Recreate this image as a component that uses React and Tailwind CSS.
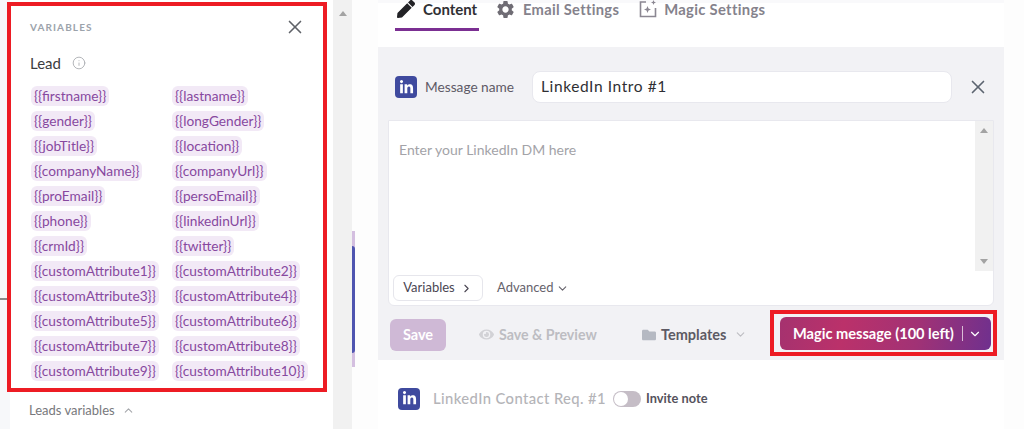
import React from 'react';
import { ChevronDown, ChevronRight, ChevronUp, Info, X } from 'lucide-react';
import { FaEye, FaFolder, FaLinkedinIn, FaPen } from 'react-icons/fa';
import { MdSettings } from 'react-icons/md';

const variables = [
  ['{{firstname}}', '{{lastname}}'],
  ['{{gender}}', '{{longGender}}'],
  ['{{jobTitle}}', '{{location}}'],
  ['{{companyName}}', '{{companyUrl}}'],
  ['{{proEmail}}', '{{persoEmail}}'],
  ['{{phone}}', '{{linkedinUrl}}'],
  ['{{crmId}}', '{{twitter}}'],
  ['{{customAttribute1}}', '{{customAttribute2}}'],
  ['{{customAttribute3}}', '{{customAttribute4}}'],
  ['{{customAttribute5}}', '{{customAttribute6}}'],
  ['{{customAttribute7}}', '{{customAttribute8}}'],
  ['{{customAttribute9}}', '{{customAttribute10}}'],
];

const LinkedinBadge = () => (
  <span className="flex h-[22px] w-[22px] shrink-0 items-center justify-center rounded-[4px] bg-[#3f4a9e] text-white">
    <FaLinkedinIn size={15} />
  </span>
);

const MagicIcon = () => (
  <svg width="20" height="20" viewBox="0 0 20 20" fill="none" className="shrink-0 text-[#8b8792]">
    <path d="M8 3H2.5v14.500h15V9" stroke="currentColor" strokeWidth="1.600" />
    <path d="M9.500 7l1 2.500 2.500 1-2.500 1-1 2.500-1-2.500-2.500-1 2.500-1z" fill="currentColor" />
    <path d="M15.500 1l.7 1.800 1.800.7-1.800.7-.7 1.800-.7-1.800-1.800-.7 1.800-.7z" fill="currentColor" />
  </svg>
);

const VariablesPanel = () => (
  <div className="flex h-full w-[323px] flex-col bg-white">
    <div className="-ml-[3px] mt-[2px] h-[390px] w-[320px] border-4 border-[#ed1c24] pl-5 pr-[20px]">
      <div className="flex h-[42px] items-center justify-between">
        <span className="-ml-px text-[10px] font-bold tracking-[1.100px] text-[#9ca3ab]">VARIABLES</span>
        <X size={22} strokeWidth={1.800} className="-mr-[3px] text-[#5f6268]" />
      </div>
      <div className="-ml-px flex h-[30px] items-center gap-[11px] text-[15px] text-[#3c3c40]">
        Lead
        <Info size={14} strokeWidth={1.500} className="text-[#a9abb0]" />
      </div>
      <div className="mt-[8px] grid grid-cols-[141px_1fr] gap-y-[5px]">
        {variables.flat().map((name) => (
          <span
            key={name}
            className="h-5 justify-self-start rounded-[6px] bg-[#f2e9f6] px-[3px] text-[13.700px] leading-5 text-[#87489f]"
          >
            {name}
          </span>
        ))}
      </div>
    </div>
    <div className="ml-[19px] mt-[9px] flex items-center gap-[7px] text-[13px] text-[#77787c]">
      Leads variables
      <ChevronUp size={13} className="text-[#a6a8ac]" />
    </div>
  </div>
);

const Tabs = () => (
  <div className="h-[44px] bg-white pl-[17px]">
    <div className="flex h-[28px] items-start">
      <div className="h-[28px] w-[84px] border-b-[3px] border-[#7b2f92]">
        <div className="flex h-[12px] items-center gap-2 pl-[2px] text-[15px] font-bold text-[#303034]">
          <FaPen size={18} className="text-[#222226]" />
          Content
        </div>
      </div>
      <div className="ml-[16px] flex h-[12px] items-center gap-[7px] text-[14.700px] font-bold tracking-[.3px] text-[#85828c]">
        <MdSettings size={21} className="text-[#6f6c74]" />
        Email Settings
      </div>
      <div className="ml-[19px] flex h-[12px] items-center gap-[6px] text-[14.800px] font-bold tracking-[.3px] text-[#85828c]">
        <MagicIcon />
        Magic Settings
      </div>
    </div>
  </div>
);

const Editor = () => (
  <div className="ml-[10px] mt-[17px] flex h-[186px] w-[606px] flex-col rounded-b-[6px] border border-[#e8e8ee] bg-white">
    <div className="flex h-[150px] justify-between">
      <p className="pl-[10px] pt-[18px] text-[14px] text-[#a3a3a8]">Enter your LinkedIn DM here</p>
      <div className="flex w-[18px] flex-col items-center justify-between bg-[#f1f1f1] py-[7px]">
        <span className="h-0 w-0 border-x-4 border-b-[5px] border-x-transparent border-b-[#a3a3a3]" />
        <span className="h-0 w-0 border-x-4 border-t-[5px] border-x-transparent border-t-[#a3a3a3]" />
      </div>
    </div>
    <div className="mt-[4px] flex items-center pl-[4px]">
      <div className="flex h-[26px] w-[90px] items-center justify-center gap-[5px] rounded-[6px] border border-[#e6e6ec] text-[13px] text-[#4a4652]">
        Variables
        <ChevronRight size={13} />
      </div>
      <div className="ml-[14px] flex items-center gap-[3px] text-[13px] text-[#66636c]">
        Advanced
        <ChevronDown size={13} />
      </div>
    </div>
  </div>
);

const ActionBar = () => (
  <div className="ml-[12px] flex h-[54px] items-center">
    <div className="mt-[3px] flex h-8 w-[56px] shrink-0 items-center justify-center rounded-[6px] bg-[#cfb9d6] text-[14.500px] font-bold text-white">
      Save
    </div>
    <div className="ml-[33px] mt-[3px] flex w-[118px] shrink-0 items-center gap-[5px] whitespace-nowrap text-[14.200px] font-bold text-[#bdbdc2]">
      <FaEye size={15} className="shrink-0 text-[#d2d2d6]" />
      Save &amp; Preview
    </div>
    <div className="ml-[45px] mt-[3px] flex w-[103px] shrink-0 items-center gap-[5px] text-[14.500px] font-bold text-[#5d5a64]">
      <FaFolder size={14} className="shrink-0 text-[#b5b9c2]" />
      Templates
      <ChevronDown size={13} className="ml-[3px] shrink-0 text-[#bdbdc2]" />
    </div>
    <div className="ml-[25px] h-[46px] w-[227px] shrink-0 border-4 border-[#ed1c24] pl-[6px] pt-[3px]">
      <div className="flex h-[33px] w-[211px] items-center whitespace-nowrap rounded-[6px] bg-[linear-gradient(100deg,#a5326f_0%,#bb316a_30%,#a13275_65%,#6f308e_100%)] pl-[13px] text-[14.600px] font-bold text-white">
        Magic message (100 left)
        <span className="ml-2 h-[15px] w-px shrink-0 bg-[#d9bcd6]" />
        <ChevronDown size={14} className="ml-[5px] shrink-0" />
      </div>
    </div>
  </div>
);

const ContactRow = () => (
  <div className="flex h-[69px] items-center bg-white pl-5 pt-[8px]">
    <LinkedinBadge />
    <span className="ml-[13px] whitespace-nowrap text-[14.800px] font-medium tracking-[.4px] text-[#b4b4b8]">LinkedIn Contact Req. #1</span>
    <span className="ml-[7px] flex h-4 w-[28px] shrink-0 items-center rounded-full bg-[#c5bdc6] pl-px">
      <span className="h-[14px] w-[14px] rounded-full bg-white" />
    </span>
    <span className="ml-[5px] whitespace-nowrap text-[12.800px] font-bold text-[#55525c]">Invite note</span>
  </div>
);

const App = () => (
  <div className="relative flex h-[429px] w-[1024px] overflow-hidden bg-[#fdfdfd] font-['Lato',sans-serif]">
    {/* cut-off divider behind the panel */}
    <span className="absolute left-0 top-[298px] h-[2px] w-[7px] bg-[#8a8a8a]" />
    <div className="h-full w-[333px] bg-[#f7f8fa] pl-[10px]">
      <VariablesPanel />
    </div>
    <div className="flex h-full w-[19px] flex-col items-center bg-[#f1f1f1] pt-[11px]">
      <span className="h-0 w-0 border-x-4 border-b-[5px] border-x-transparent border-b-[#a3a3a3]" />
    </div>
    <div className="h-full w-[26px]">
      <div className="mt-[231px] h-[136px] w-[3px] bg-[#d4bfe0] pt-[15px]">
        <div className="h-[107px] w-[3px] rounded-r-[3px] bg-[#4f55b0]" />
      </div>
    </div>
    <div className="h-full w-[626px] bg-[#f9f9fb] pt-[3px]">
      <Tabs />
      <div className="h-[313px] bg-[#f2f2f5]">
        <div className="flex h-[56px] items-end pl-[17px]">
          <div className="flex h-[32px] w-full items-center">
            <LinkedinBadge />
            <span className="ml-2 w-[107px] text-[13.700px] text-[#5e5a66]">Message name</span>
            <span className="flex h-[32px] w-[420px] items-center rounded-[8px] border border-[#e8e8ee] bg-white pl-[8px] text-[15.500px] tracking-[.6px] text-[#2f2f33]">
              LinkedIn Intro #1
            </span>
            <X size={22} strokeWidth={1.800} className="ml-[15px] text-[#5c6470]" />
          </div>
        </div>
        <Editor />
        <ActionBar />
      </div>
      <ContactRow />
    </div>
  </div>
);

export default App;
